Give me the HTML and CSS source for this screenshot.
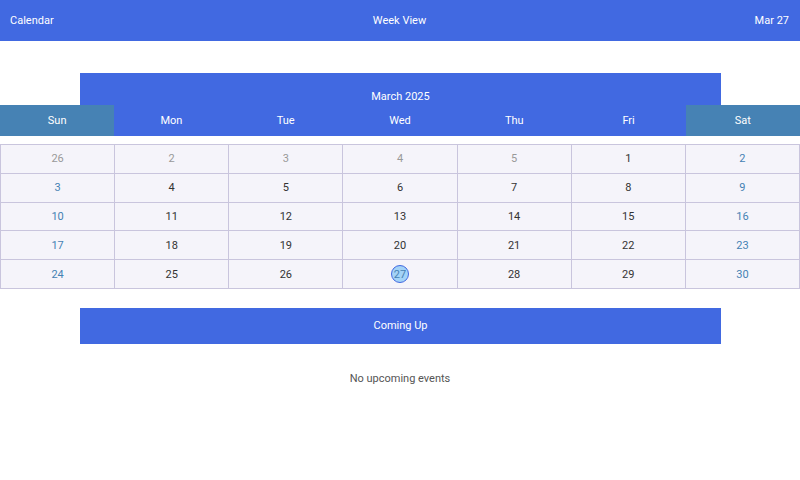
FILE: index.html
```html
<!DOCTYPE html>
<html>
<head>
<meta charset="utf-8">
<link rel="stylesheet" href="styles.css">
</head>
<body>
<header class="topbar">
  <span class="tb-left">Calendar</span>
  <span class="tb-center">Week View</span>
  <span class="tb-right">Mar 27</span>
</header>
<main>
  <div class="month">March 2025</div>
  <div class="weekdays">
    <div class="wd weekend">Sun</div>
    <div class="wd">Mon</div>
    <div class="wd">Tue</div>
    <div class="wd">Wed</div>
    <div class="wd">Thu</div>
    <div class="wd">Fri</div>
    <div class="wd weekend">Sat</div>
  </div>
  <table class="grid">
    <tr><td class="other">26</td><td class="other">2</td><td class="other">3</td><td class="other">4</td><td class="other">5</td><td>1</td><td class="we">2</td></tr>
    <tr><td class="we">3</td><td>4</td><td>5</td><td>6</td><td>7</td><td>8</td><td class="we">9</td></tr>
    <tr><td class="we">10</td><td>11</td><td>12</td><td>13</td><td>14</td><td>15</td><td class="we">16</td></tr>
    <tr><td class="we">17</td><td>18</td><td>19</td><td>20</td><td>21</td><td>22</td><td class="we">23</td></tr>
    <tr><td class="we">24</td><td>25</td><td>26</td><td><span class="today">27</span></td><td>28</td><td>29</td><td class="we">30</td></tr>
  </table>
  <div class="coming">Coming Up</div>
  <div class="empty">No upcoming events</div>
</main>
</body>
</html>
```
FILE: styles.css
```css
html, body {
  margin: 0;
  padding: 0;
  background: #ffffff;
  font-family: Roboto, "Liberation Sans", sans-serif;
  font-size: 11px;
}
.topbar {
  height: 41px;
  background: #4169e1;
  color: #ffffff;
  display: flex;
  align-items: center;
  justify-content: space-between;
  padding: 0 11px 0 10px;
}
.topbar span { flex: 1; }
.tb-center { text-align: center; }
.tb-right { text-align: right; }
main {
  padding-top: 32px;
}
.month {
  margin: 0 79px 0 80px;
  height: 32px;
  box-sizing: border-box;
  background: #4169e1;
  color: #ffffff;
  text-align: center;
  padding-top: 17px;
  line-height: 13px;
}
.weekdays {
  display: grid;
  grid-template-columns: repeat(7, 1fr);
  height: 31px;
  background: #4169e1;
}
.wd {
  color: #ffffff;
  display: flex;
  align-items: center;
  justify-content: center;
}
.wd.weekend { background: #4682b4; }
.grid {
  margin-top: 8px;
  width: 100%;
  table-layout: fixed;
  border-collapse: collapse;
  background: #f5f4fa;
}
.grid td {
  border: 1px solid #c9c5dd;
  height: 27.8px;
  padding: 0;
  text-align: center;
  vertical-align: middle;
  color: #333333;
}
.grid td.other { color: #999999; }
.grid td.we { color: #4682b4; }
.today {
  display: inline-flex;
  align-items: center;
  justify-content: center;
  width: 16px;
  height: 16px;
  border-radius: 50%;
  border: 1px solid #4169e1;
  background: #a3d3f7;
  color: #4682b4;
}
.coming {
  margin: 19px 79px 0 80px;
  height: 36px;
  background: #4169e1;
  color: #ffffff;
  display: flex;
  align-items: center;
  justify-content: center;
}
.empty {
  text-align: center;
  color: #555555;
  margin-top: 28px;
  line-height: 13px;
}
```
